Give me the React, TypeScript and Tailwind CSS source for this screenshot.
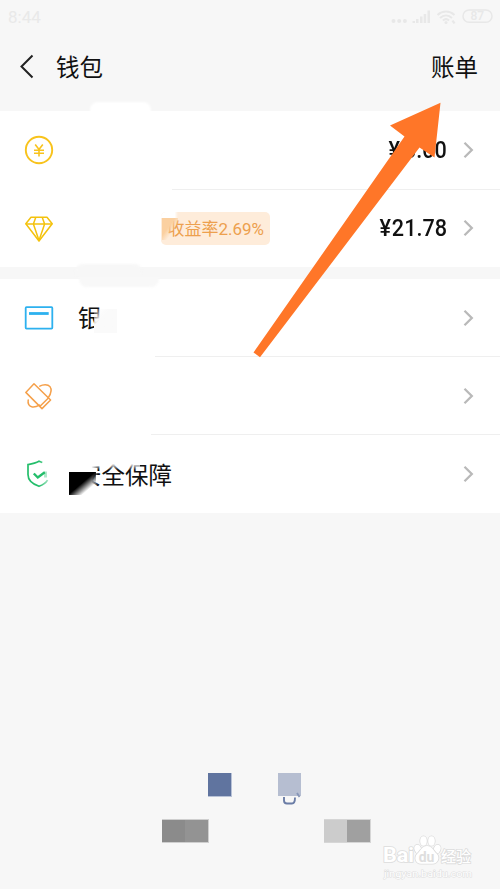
import React, { JSX } from "react";

type RowProps = {
  icon: JSX.Element;
  children?: React.ReactNode;
  amount?: string;
  divider?: string;
};

const Chevron = () => (
  <svg width="12" height="18" viewBox="0 0 12 18" fill="none">
    <path d="M1.500 1.800l7.300 7.200-7.300 7.200" stroke="#b9b9b9" strokeWidth="2.3" />
  </svg>
);

const CoinIcon = () => (
  <svg width="30" height="30" viewBox="0 0 30 30" fill="none" stroke="#f8c31c">
    <circle cx="15" cy="15" r="13.2" strokeWidth="1.9" />
    <path
      d="M11.2 9.5l3.8 5 3.8-5M10 15.2h10M10 18.2h10M15 14.5v7"
      strokeWidth="1.6"
    />
  </svg>
);

const DiamondIcon = () => (
  <svg
    className="translate-y-px"
    width="30"
    height="30"
    viewBox="0 0 30 30"
    fill="none"
    stroke="#f4c20d"
    strokeWidth="1.5"
    strokeLinejoin="round"
  >
    <path d="M7 3.3h16l5.2 6.4L15 27 1.8 9.7z" />
    <path d="M1.800 10h26.400M11.800 3.300L9.400 10 15 26.600 20.600 10l-2.400-6.700" />
  </svg>
);

const CardIcon = () => (
  <svg width="30" height="30" viewBox="0 0 30 30" fill="none" stroke="#2db1ef">
    <rect x="1.7" y="4.2" width="26.6" height="21.4" rx="0.8" strokeWidth="1.8" />
    <path d="M5 10.500h19.700" strokeWidth="2.800" />
  </svg>
);

const TicketIcon = () => (
  <svg
    width="30"
    height="30"
    viewBox="0 0 30 30"
    fill="none"
    stroke="#f5a04a"
    strokeWidth="1.5"
    strokeLinejoin="round"
    strokeLinecap="round"
  >
    <path d="M10 2.8L26.6 19 18 27.6 1.8 11.4z" />
    <path d="M16 25.200l8.400-8.200" />
    <path d="M15.800 5.200c3-1.800 8.100-2.200 10.200.4 2 2.800 1 7-1.700 11M4.200 19c-.6 3.700.7 6.600 4.100 6.900 2.400.3 5-.6 7.200-1.800" />
  </svg>
);

const ShieldIcon = () => (
  <svg width="30" height="30" viewBox="0 0 30 30" fill="none">
    <defs>
      <linearGradient id="shield" x1="0" y1="0" x2="30" y2="0" gradientUnits="userSpaceOnUse">
        <stop offset="0.5" stopColor="#24be6b" />
        <stop offset="0.8" stopColor="#24be6b" stopOpacity="0.45" />
      </linearGradient>
    </defs>
    <path
      d="M18.300 3.500L15 2.300c-3 1.700-6.600 2.600-11 3.300v10C4 21 8.600 25.200 15 27.300c4-1.400 6.800-3.300 8.600-6.200"
      stroke="url(#shield)"
      strokeWidth="1.7"
    />
    <path d="M9.800 14.500l4 4 7-5.200" stroke="#24be6b" strokeWidth="2.4" />
    <path d="M21.500 12.500v6" stroke="#24be6b" strokeOpacity="0.35" strokeWidth="3" />
  </svg>
);

const Row = ({ icon, children, amount, divider }: RowProps) => (
  <div className="relative flex h-[78px] items-center bg-white pr-[25px] pl-6">
    {icon}
    {children}
    <div className="ml-auto flex items-center">
      {amount && (
        <span className="mr-[16px] flex origin-right scale-x-[0.9] gap-px text-[24px] leading-none font-medium text-[#111]">
          <span>¥</span>
          <span className="min-w-[51px] text-right">{amount}</span>
        </span>
      )}
      <Chevron />
    </div>
    {divider && <i className={`absolute right-0 z-10 h-px bg-[#efefef] ${divider}`} />}
  </div>
);

const StatusBar = () => (
  <div className="flex h-[34px] items-center justify-between pr-[7px] pl-2 text-[#e9e9e9]">
    <span className="text-[17px] leading-none">8:44</span>
    <svg width="103" height="18" viewBox="0 0 103 18" fill="#e8e8e8">
      <circle cx="3.500" cy="13" r="2" />
      <circle cx="9.200" cy="13" r="2" />
      <circle cx="14.900" cy="13" r="2" />
      <path d="M22.500 13H25v2h-2.500zM26 11h2.500v4H26zM30 8.500h2.500V15H30zM33.700 6h2.500v9h-2.500zM37.500 2.500H40V15h-2.500z" />
      <g fill="none" stroke="#e8e8e8" strokeWidth="2">
        <path d="M47.500 7c5-4.600 12-4.600 17 0M50 10c3.600-3.400 8.400-3.400 12 0M52.900 12.500c2-1.800 4.200-1.800 6.200 0" />
        <rect x="73" y="2" width="29" height="12.300" rx="6" strokeWidth="1.500" />
      </g>
      <circle cx="56" cy="14.500" r="1.500" />
      <path d="M61.500 13l2-1 2 3-2 1z" />
      <text x="87.300" y="12.400" textAnchor="middle" fontSize="12" fontWeight="500" fontFamily="Roboto">
        87
      </text>
    </svg>
  </div>
);

const Watermark = () => (
  <svg
    className="absolute top-[832px] left-[380px]"
    width="100"
    height="52"
    viewBox="0 0 100 52"
    fill="#fff"
    stroke="#dcdcdc"
    strokeWidth="1.6"
    paintOrder="stroke"
    fontFamily="Roboto, 'Noto Sans CJK SC', sans-serif"
  >
    <text x="3" y="30.300" fontSize="20" fontWeight="700" textLength="31" lengthAdjust="spacingAndGlyphs">
      Bai
    </text>
    <ellipse cx="37.500" cy="17" rx="3.300" ry="4.400" transform="rotate(-20 38 16)" />
    <ellipse cx="43.500" cy="9" rx="3.300" ry="4.700" />
    <ellipse cx="51.500" cy="9" rx="3.300" ry="4.700" />
    <ellipse cx="57.500" cy="17" rx="3.300" ry="4.400" transform="rotate(20 57 16)" />
    <path d="M47 14c5 0 6.500 5 9.500 7.500 4 4 1.500 10-4 10.300H41c-5.500-.3-7.500-6.300-3.500-10.300C40.500 19 42 14 47 14z" />
    <text x="46.500" y="29.500" fontSize="14" fontWeight="700" textAnchor="middle" fill="#dedede" stroke="none">
      du
    </text>
    <text x="61" y="29.500" fontSize="15" fontWeight="500" textLength="30">
      经验
    </text>
    <text x="4" y="44.500" fontSize="9" textLength="88" lengthAdjust="spacingAndGlyphs" strokeWidth="1" stroke="#dfdfdf">
      jingyan.baidu.com
    </text>
  </svg>
);

export default function App() {
  return (
    <div className="relative h-[889px] w-[500px] overflow-hidden bg-[#f7f7f7] font-[Roboto,'Noto_Sans_CJK_SC',sans-serif] text-[#111]">
      <StatusBar />
      <header className="flex h-[77px] items-start pt-[17px] pr-[22px] pl-[19px]">
        <svg className="mt-[3px]" width="16" height="26" viewBox="0 0 16 26" fill="none">
          <path d="M13.500 1.500L2.500 12.500l11 11" stroke="#222" strokeWidth="2" />
        </svg>
        <h1 className="ml-[21px] text-[23.500px] leading-[34px] font-normal">钱包</h1>
        <span className="ml-auto text-[23.500px] leading-[34px]">账单</span>
      </header>

      <section>
        <Row icon={<CoinIcon />} amount="0.00" divider="-bottom-px left-[172px]" />
        <Row icon={<DiamondIcon />} amount="21.78">
          <div className="relative ml-[107px] flex h-[33px] w-[109px] items-center justify-end overflow-hidden rounded-[5px] bg-[#feecda] pt-[3px] pr-[6px] text-[17px] whitespace-nowrap text-[#eda04e]">
            收益率2.69%
            <i className="absolute top-0 left-0 h-[6px] w-[17px] bg-linear-to-r from-white from-80% to-transparent" />
            <i className="absolute top-[6px] left-[1px] h-[22px] w-4 bg-linear-to-br from-[#fbd0a0] from-40% to-transparent to-65%" />
          </div>
        </Row>
      </section>

      <section className="mt-3">
        <Row icon={<CardIcon />} divider="bottom-0 left-[155px]">
          <span className="ml-6 pt-[3px] text-[23.500px]">银</span>
          <i className="-ml-2 mt-1.5 h-[24px] w-[23px] bg-linear-to-br from-transparent to-[#fafafa] to-35%" />
        </Row>
        <Row icon={<TicketIcon />} divider="bottom-0 left-[151px]" />
        <Row icon={<ShieldIcon />}>
          <span className="relative ml-6 pt-[5px] text-[23.500px]">
            安全保障
            <i className="absolute top-0 left-0 h-[16px] w-[62px] bg-linear-to-b from-white from-60% to-transparent" />
            <i className="absolute top-[4px] -left-[2px] h-[32px] w-[22px] bg-linear-to-r from-white from-70% to-transparent" />
            <i className="absolute top-[18px] left-[-9px] h-[23px] w-[27px] bg-linear-to-br from-black from-48% to-transparent to-74%" />
          </span>
        </Row>
      </section>

      {/* smudges left over the section edges */}
      <i className="absolute top-[102px] left-[90px] h-[11px] w-[61px] rounded-t-lg bg-white blur-[1px]" />
      <i className="absolute top-[264px] left-[75px] h-[12px] w-[67px] rounded-t-lg bg-[#f7f7f7] blur-[1px]" />
      <i className="absolute top-[276px] left-[79px] h-[11px] w-[80px] rounded-b-lg bg-[#f8f8f8] blur-[1px]" />

      <i className="absolute top-[773px] left-[208px] size-[24px] border-r border-b border-[#b8c2d7] bg-[#60749f]" />
      <i className="absolute top-[773px] left-[278px] size-[23px] bg-[#b6bed1]" />
      <svg className="absolute top-[790px] left-[280px]" width="22" height="16" viewBox="0 0 22 16" fill="none">
        <path d="M4 7v3.500q0 3 3 3h5q3 0 3-6" stroke="#6b7da6" strokeWidth="1.900" />
        <path d="M17 3l2.500 4" stroke="#8696b8" strokeWidth="1.700" />
      </svg>
      <div className="absolute top-[819px] left-[162px] flex h-[24px] w-[47px] border-t border-r border-b border-[#cfcfcf]">
        <i className="w-[23px] bg-[#8b8b8b]" />
        <i className="flex-1 bg-[#939393]" />
      </div>
      <div className="absolute top-[819px] left-[324px] flex h-[24px] w-[47px] border-t border-r border-b border-[#d6d6d6]">
        <i className="w-[23px] bg-[#cccccc]" />
        <i className="flex-1 bg-[#a0a0a0]" />
      </div>

      <Watermark />

      <svg className="absolute top-[95px] left-[245px] z-20" width="205" height="270" viewBox="245 95 205 270">
        <path d="M440.500 102.800L390 125.500 404.500 136.500 253.500 352.500 260 357.300 419.500 147.500 434.500 157.500z" fill="#ff7628" />
      </svg>
    </div>
  );
}
